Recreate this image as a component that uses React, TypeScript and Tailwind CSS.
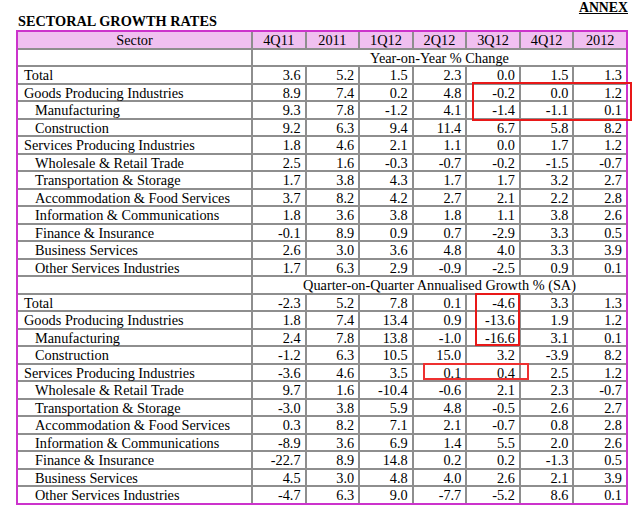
import React from "react"

type Row = { label: string; indent?: boolean; values: string[] }

const yoy: Row[] = [
  { label: "Total", values: ["3.6", "5.2", "1.5", "2.3", "0.0", "1.5", "1.3"] },
  { label: "Goods Producing Industries", values: ["8.9", "7.4", "0.2", "4.8", "-0.2", "0.0", "1.2"] },
  { label: "Manufacturing", indent: true, values: ["9.3", "7.8", "-1.2", "4.1", "-1.4", "-1.1", "0.1"] },
  { label: "Construction", indent: true, values: ["9.2", "6.3", "9.4", "11.4", "6.7", "5.8", "8.2"] },
  { label: "Services Producing Industries", values: ["1.8", "4.6", "2.1", "1.1", "0.0", "1.7", "1.2"] },
  { label: "Wholesale & Retail Trade", indent: true, values: ["2.5", "1.6", "-0.3", "-0.7", "-0.2", "-1.5", "-0.7"] },
  { label: "Transportation & Storage", indent: true, values: ["1.7", "3.8", "4.3", "1.7", "1.7", "3.2", "2.7"] },
  { label: "Accommodation & Food Services", indent: true, values: ["3.7", "8.2", "4.2", "2.7", "2.1", "2.2", "2.8"] },
  { label: "Information & Communications", indent: true, values: ["1.8", "3.6", "3.8", "1.8", "1.1", "3.8", "2.6"] },
  { label: "Finance & Insurance", indent: true, values: ["-0.1", "8.9", "0.9", "0.7", "-2.9", "3.3", "0.5"] },
  { label: "Business Services", indent: true, values: ["2.6", "3.0", "3.6", "4.8", "4.0", "3.3", "3.9"] },
  { label: "Other Services Industries", indent: true, values: ["1.7", "6.3", "2.9", "-0.9", "-2.5", "0.9", "0.1"] },
]

const qoq: Row[] = [
  { label: "Total", values: ["-2.3", "5.2", "7.8", "0.1", "-4.6", "3.3", "1.3"] },
  { label: "Goods Producing Industries", values: ["1.8", "7.4", "13.4", "0.9", "-13.6", "1.9", "1.2"] },
  { label: "Manufacturing", indent: true, values: ["2.4", "7.8", "13.8", "-1.0", "-16.6", "3.1", "0.1"] },
  { label: "Construction", indent: true, values: ["-1.2", "6.3", "10.5", "15.0", "3.2", "-3.9", "8.2"] },
  { label: "Services Producing Industries", values: ["-3.6", "4.6", "3.5", "0.1", "0.4", "2.5", "1.2"] },
  { label: "Wholesale & Retail Trade", indent: true, values: ["9.7", "1.6", "-10.4", "-0.6", "2.1", "2.3", "-0.7"] },
  { label: "Transportation & Storage", indent: true, values: ["-3.0", "3.8", "5.9", "4.8", "-0.5", "2.6", "2.7"] },
  { label: "Accommodation & Food Services", indent: true, values: ["0.3", "8.2", "7.1", "2.1", "-0.7", "0.8", "2.8"] },
  { label: "Information & Communications", indent: true, values: ["-8.9", "3.6", "6.9", "1.4", "5.5", "2.0", "2.6"] },
  { label: "Finance & Insurance", indent: true, values: ["-22.7", "8.9", "14.8", "0.2", "0.2", "-1.3", "0.5"] },
  { label: "Business Services", indent: true, values: ["4.5", "3.0", "4.8", "4.0", "2.6", "2.1", "3.9"] },
  { label: "Other Services Industries", indent: true, values: ["-4.7", "6.3", "9.0", "-7.7", "-5.2", "8.6", "0.1"] },
]

const columns = ["4Q11", "2011", "1Q12", "2Q12", "3Q12", "4Q12", "2012"]

function DataRows({ rows }: { rows: Row[] }) {
  return (
    <>
      {rows.map(r => (
        <React.Fragment key={r.label}>
          <div className={`bg-white ${r.indent ? "pl-[17px]" : "pl-[6px]"} whitespace-nowrap`}>{r.label}</div>
          {r.values.map((v, i) => (
            <div key={i} className="bg-white text-right pr-[4px]">{v}</div>
          ))}
        </React.Fragment>
      ))}
    </>
  )
}

function SectionLabel({ text }: { text: string }) {
  return (
    <>
      <div className="bg-white" />
      <div className="bg-white col-span-7 text-center">{text}</div>
    </>
  )
}

export default function App() {
  return (
    <div
      className="relative w-[640px] h-[509px] bg-white text-black overflow-hidden"
      style={{ fontFamily: '"Liberation Serif", "Times New Roman", serif' }}
    >
      <div className="flex justify-between items-start pl-[18px] pr-[12px]">
        <div className="pt-[14px] text-[14.3px] font-bold leading-[15px]">SECTORAL GROWTH RATES</div>
        <div className="pt-[1px] text-[13.8px] font-bold leading-[14px] underline">ANNEX</div>
      </div>

      <div className="ml-[16px] mt-[1px] w-[612px] border-2 border-[#cc33cc]">
        <div className="grid grid-cols-[233px_repeat(7,1fr)] auto-rows-[15.5px] gap-[2px] bg-[#8e8e8e] text-[14.3px] leading-[16px]">
          <div className="bg-[#f0c0f0] text-center">Sector</div>
          {columns.map(c => (
            <div key={c} className="bg-[#f0c0f0] text-center">{c}</div>
          ))}
          <SectionLabel text="Year-on-Year % Change" />
          <DataRows rows={yoy} />
          <SectionLabel text="Quarter-on-Quarter Annualised Growth % (SA)" />
          <DataRows rows={qoq} />
        </div>
      </div>

      {/* red highlight boxes */}
      <div className="absolute left-[472px] top-[82px] w-[160px] h-[39px] border-2 border-[#e81818]" />
      <div className="absolute left-[475px] top-[293px] w-[45px] h-[53px] border-2 border-[#e81818]" />
      <div className="absolute left-[423px] top-[363px] w-[106px] h-[17px] border-2 border-[#ee3030]" />
    </div>
  )
}
